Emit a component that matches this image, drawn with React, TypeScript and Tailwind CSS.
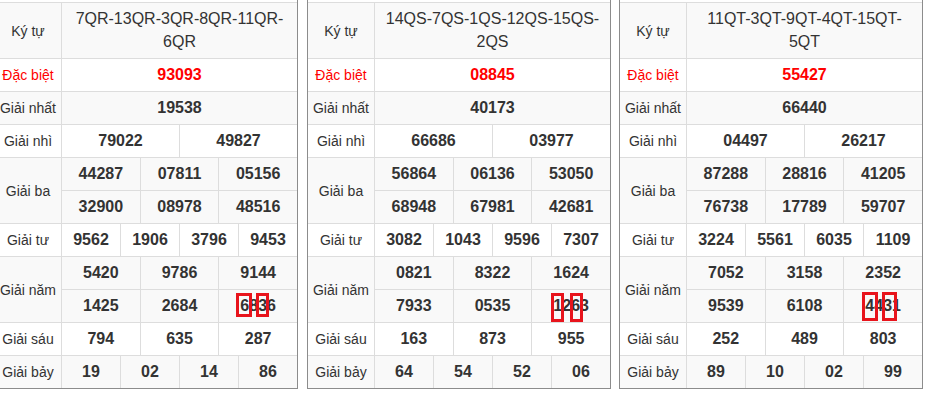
import React from "react";

type Box = { left: number; top: number; w: number; h: number };
type TableData = {
  head: [string, string];
  db: string;
  nhat: string;
  nhi: string[];
  ba: string[][];
  tu: string[];
  nam: string[][];
  sau: string[];
  bay: string[];
  boxes: Box[];
};

const tables: TableData[] = [
  {
    head: ["7QR-13QR-3QR-8QR-11QR-", "6QR"],
    db: "93093",
    nhat: "19538",
    nhi: ["79022", "49827"],
    ba: [
      ["44287", "07811", "05156"],
      ["32900", "08978", "48516"],
    ],
    tu: ["9562", "1906", "3796", "9453"],
    nam: [
      ["5420", "9786", "9144"],
      ["1425", "2684", "6836"],
    ],
    sau: ["794", "635", "287"],
    bay: ["19", "02", "14", "86"],
    boxes: [
      { left: -4, top: -3, w: 16, h: 24 },
      { left: 16, top: -3, w: 13, h: 24 },
    ],
  },
  {
    head: ["14QS-7QS-1QS-12QS-15QS-", "2QS"],
    db: "08845",
    nhat: "40173",
    nhi: ["66686", "03977"],
    ba: [
      ["56864", "06136", "53050"],
      ["68948", "67981", "42681"],
    ],
    tu: ["3082", "1043", "9596", "7307"],
    nam: [
      ["0821", "8322", "1624"],
      ["7933", "0535", "1263"],
    ],
    sau: ["163", "873", "955"],
    bay: ["64", "54", "52", "06"],
    boxes: [
      { left: -2, top: -3, w: 13, h: 29 },
      { left: 17, top: -3, w: 13, h: 29 },
    ],
  },
  {
    head: ["11QT-3QT-9QT-4QT-15QT-", "5QT"],
    db: "55427",
    nhat: "66440",
    nhi: ["04497", "26217"],
    ba: [
      ["87288", "28816", "41205"],
      ["76738", "17789", "59707"],
    ],
    tu: ["3224", "5561", "6035", "1109"],
    nam: [
      ["7052", "3158", "2352"],
      ["9539", "6108", "4431"],
    ],
    sau: ["252", "489", "803"],
    bay: ["89", "10", "02", "99"],
    boxes: [
      { left: -3, top: -4, w: 16, h: 29 },
      { left: 17, top: -4, w: 15, h: 29 },
    ],
  },
];

const GRAY = "bg-[#f9f9f9]";
const WHITE = "bg-white";

function Label({
  text,
  bg,
  red,
  span2,
}: {
  text: string;
  bg: string;
  red?: boolean;
  span2?: boolean;
}) {
  return (
    <div
      className={`${bg} ${span2 ? "row-span-2" : ""} flex items-center justify-center text-[14px] leading-[20px] ${
        red ? "text-[#ff0000]" : "text-[#333333]"
      }`}
    >
      {text}
    </div>
  );
}

function Num({
  value,
  bg,
  span,
  red,
  boxes,
}: {
  value: string;
  bg: string;
  span: 3 | 4 | 6 | 12;
  red?: boolean;
  boxes?: Box[];
}) {
  const spanClass =
    span === 3
      ? "col-span-3"
      : span === 4
      ? "col-span-4"
      : span === 6
      ? "col-span-6"
      : "col-span-12";
  return (
    <div
      className={`${bg} ${spanClass} flex items-center justify-center text-[16px] leading-[20px] font-bold ${
        red ? "text-[#ff0000]" : "text-[#333333]"
      }`}
    >
      <span className="relative inline-block">
        {value}
        {boxes?.map((b, i) => (
          <span
            key={i}
            className="absolute border-[3px] border-[#e8141c]"
            style={{ left: b.left, top: b.top, width: b.w, height: b.h }}
          />
        ))}
      </span>
    </div>
  );
}

function Table({ t, className }: { t: TableData; className: string }) {
  return (
    <div
      className={`w-[304px] shrink-0 border-x border-b border-[#8c8c8c] bg-white pt-[2px] ${className}`}
    >
      <div className="grid grid-cols-[66px_repeat(12,minmax(0,1fr))] grid-rows-[55px_repeat(10,32px)] gap-px border-t border-[#dddddd] bg-[#dddddd]">
        {/* header */}
        <Label text="Ký tự" bg={GRAY} />
        <div
          className={`${GRAY} col-span-12 flex flex-col items-center justify-center text-center text-[16px] leading-[22.86px] text-[#333333]`}
        >
          <span>{t.head[0]}</span>
          <span>{t.head[1]}</span>
        </div>
        {/* Đặc biệt */}
        <Label text="Đặc biệt" bg={WHITE} red />
        <Num value={t.db} bg={WHITE} span={12} red />
        {/* Giải nhất */}
        <Label text="Giải nhất" bg={GRAY} />
        <Num value={t.nhat} bg={GRAY} span={12} />
        {/* Giải nhì */}
        <Label text="Giải nhì" bg={WHITE} />
        {t.nhi.map((v, i) => (
          <Num key={i} value={v} bg={WHITE} span={6} />
        ))}
        {/* Giải ba */}
        <Label text="Giải ba" bg={GRAY} span2 />
        {t.ba[0].map((v, i) => (
          <Num key={i} value={v} bg={GRAY} span={4} />
        ))}
        {t.ba[1].map((v, i) => (
          <Num key={i} value={v} bg={GRAY} span={4} />
        ))}
        {/* Giải tư */}
        <Label text="Giải tư" bg={WHITE} />
        {t.tu.map((v, i) => (
          <Num key={i} value={v} bg={WHITE} span={3} />
        ))}
        {/* Giải năm */}
        <Label text="Giải năm" bg={GRAY} span2 />
        {t.nam[0].map((v, i) => (
          <Num key={i} value={v} bg={GRAY} span={4} />
        ))}
        {t.nam[1].map((v, i) => (
          <Num
            key={i}
            value={v}
            bg={GRAY}
            span={4}
            boxes={i === 2 ? t.boxes : undefined}
          />
        ))}
        {/* Giải sáu */}
        <Label text="Giải sáu" bg={WHITE} />
        {t.sau.map((v, i) => (
          <Num key={i} value={v} bg={WHITE} span={4} />
        ))}
        {/* Giải bảy */}
        <Label text="Giải bảy" bg={GRAY} />
        {t.bay.map((v, i) => (
          <Num key={i} value={v} bg={GRAY} span={3} />
        ))}
      </div>
    </div>
  );
}

export default function App() {
  return (
    <div
      className="h-[394px] w-[926px] overflow-hidden bg-white"
      style={{ fontFamily: '"Liberation Sans", Arial, sans-serif' }}
    >
      <div className="-ml-[6px] flex items-start">
        <Table t={tables[0]} className="mr-[9px]" />
        <Table t={tables[1]} className="mr-[8px]" />
        <Table t={tables[2]} className="" />
      </div>
    </div>
  );
}
